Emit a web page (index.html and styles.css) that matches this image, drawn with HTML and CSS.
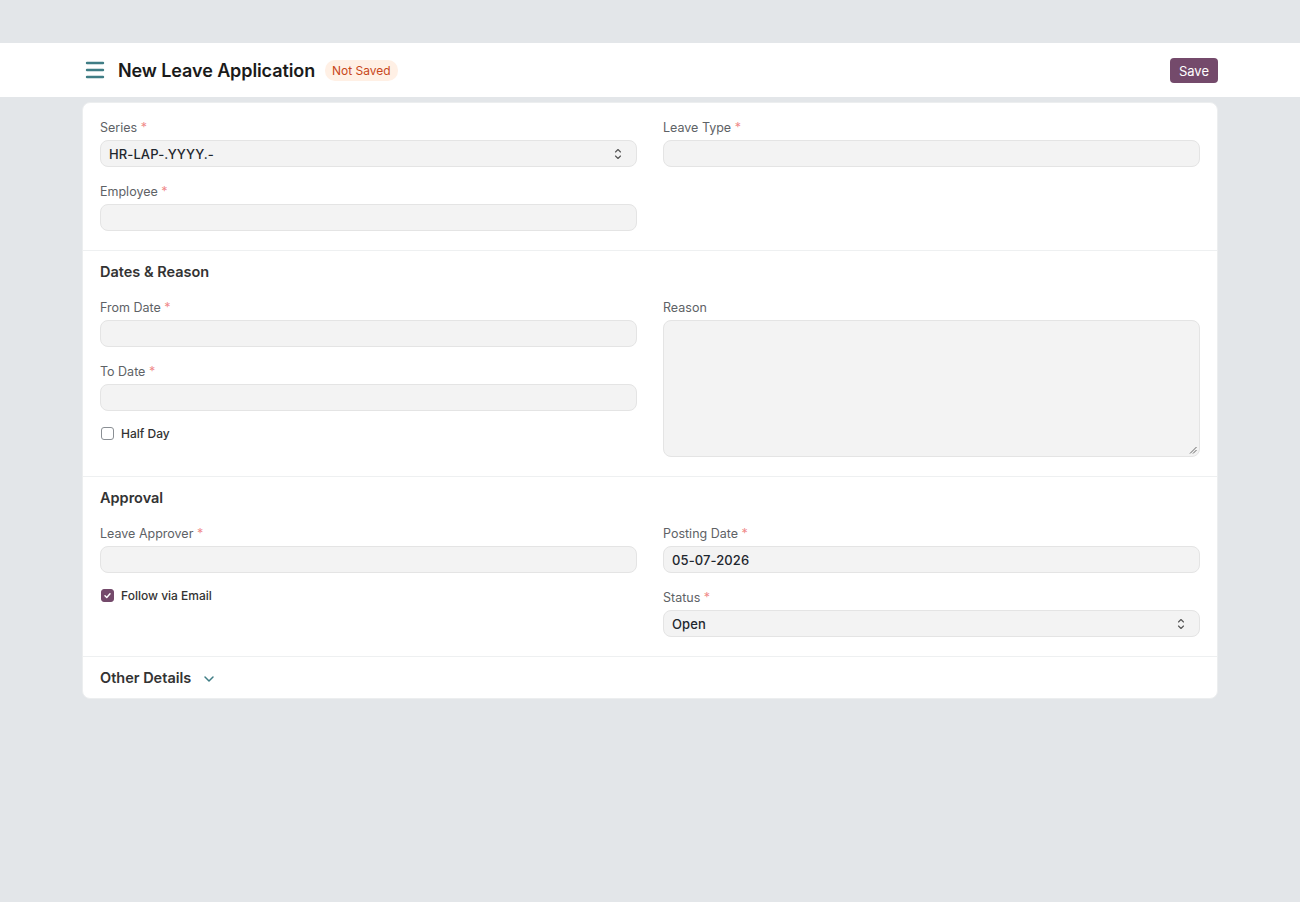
FILE: index.html
```html
<!DOCTYPE html>
<html lang="en">
<head>
    <meta charset="UTF-8">
    <meta name="viewport" content="width=device-width, initial-scale=1.0">
    <title>New Leave Application</title>
    <link rel="stylesheet" href="styles.css">
</head>
<body>
    <header class="page-head">
        <div class="container head-row">
            <div class="head-title">
                <svg class="menu-icon" width="20" height="20" viewBox="0 0 20 20" fill="none" stroke="currentColor" stroke-width="2.4" stroke-linecap="round">
                    <line x1="2" y1="3" x2="18" y2="3"/>
                    <line x1="2" y1="10" x2="18" y2="10"/>
                    <line x1="2" y1="17" x2="18" y2="17"/>
                </svg>
                <h1>New Leave Application</h1>
                <span class="badge">Not Saved</span>
            </div>
            <button class="btn-primary">Save</button>
        </div>
    </header>

    <main class="container">
        <div class="form-card">
            <section class="form-section first">
                <div class="cols">
                    <div class="col">
                        <div class="field">
                            <label>Series <span class="req">*</span></label>
                            <div class="input select">HR-LAP-.YYYY.-
                                <svg class="sel-arrows" width="8" height="12" viewBox="0 0 8 12" fill="none" stroke="currentColor" stroke-width="1.1" stroke-linecap="round" stroke-linejoin="round"><path d="M1.5 4 4 1.5 6.5 4"/><path d="M1.5 8 4 10.5 6.5 8"/></svg>
                            </div>
                        </div>
                        <div class="field">
                            <label>Employee <span class="req">*</span></label>
                            <div class="input"></div>
                        </div>
                    </div>
                    <div class="col">
                        <div class="field">
                            <label>Leave Type <span class="req">*</span></label>
                            <div class="input"></div>
                        </div>
                    </div>
                </div>
            </section>

            <section class="form-section">
                <h2>Dates &amp; Reason</h2>
                <div class="cols">
                    <div class="col">
                        <div class="field">
                            <label>From Date <span class="req">*</span></label>
                            <div class="input"></div>
                        </div>
                        <div class="field">
                            <label>To Date <span class="req">*</span></label>
                            <div class="input"></div>
                        </div>
                        <div class="field check">
                            <span class="box"></span>
                            <span>Half Day</span>
                        </div>
                    </div>
                    <div class="col">
                        <div class="field">
                            <label>Reason</label>
                            <div class="input textarea">
                                <svg class="grip" width="8" height="8" viewBox="0 0 8 8" stroke="#666" stroke-width="1"><line x1="7.5" y1="1" x2="1" y2="7.5"/><line x1="7.5" y1="4" x2="4" y2="7.5"/></svg>
                            </div>
                        </div>
                    </div>
                </div>
            </section>

            <section class="form-section">
                <h2>Approval</h2>
                <div class="cols">
                    <div class="col">
                        <div class="field">
                            <label>Leave Approver <span class="req">*</span></label>
                            <div class="input"></div>
                        </div>
                        <div class="field check">
                            <span class="box checked">
                                <svg width="9" height="9" viewBox="0 0 10 10" fill="none" stroke="#fff" stroke-width="1.6" stroke-linecap="round" stroke-linejoin="round"><path d="M2.2 5.2 4.2 7.2 7.8 3"/></svg>
                            </span>
                            <span>Follow via Email</span>
                        </div>
                    </div>
                    <div class="col">
                        <div class="field">
                            <label>Posting Date <span class="req">*</span></label>
                            <div class="input">05-07-2026</div>
                        </div>
                        <div class="field">
                            <label>Status <span class="req">*</span></label>
                            <div class="input select">Open
                                <svg class="sel-arrows" width="8" height="12" viewBox="0 0 8 12" fill="none" stroke="currentColor" stroke-width="1.1" stroke-linecap="round" stroke-linejoin="round"><path d="M1.5 4 4 1.5 6.5 4"/><path d="M1.5 8 4 10.5 6.5 8"/></svg>
                            </div>
                        </div>
                    </div>
                </div>
            </section>

            <section class="form-section collapsed">
                <h2>Other Details
                    <svg class="chevron" width="12" height="12" viewBox="0 0 12 12" fill="none" stroke="currentColor" stroke-width="1.5" stroke-linecap="round" stroke-linejoin="round"><path d="M2 4 6 8 10 4"/></svg>
                </h2>
            </section>
        </div>
    </main>
</body>
</html>
```

FILE: styles.css
```css
body {
    margin: 0;
    padding-top: 43px;
    background-color: #e3e6e9;
    color: #1f272e;
    font-family: Inter, "Noto Sans", sans-serif;
    min-height: 100vh;
}

.container {
    width: 1136px;
    margin: 0 auto;
}

.page-head {
    background-color: #fff;
    height: 54px;
}

.head-row {
    height: 100%;
    display: flex;
    align-items: center;
    justify-content: space-between;
}

.head-title {
    display: flex;
    align-items: center;
}

.menu-icon {
    color: #3f7d85;
    margin-left: 3px;
    margin-right: 13px;
}

h1 {
    margin: 0;
    font-size: 18px;
    font-weight: 600;
    color: #1a1a1a;
    letter-spacing: -0.1px;
}

.badge {
    margin-left: 10px;
    background-color: #fff0e5;
    color: #c8471a;
    font-size: 12px;
    padding: 3px 7px;
    border-radius: 10px;
}

.btn-primary {
    background-color: #744a6b;
    color: #fff;
    border: none;
    border-radius: 4px;
    font-family: Inter, "Noto Sans", sans-serif;
    font-size: 13px;
    padding: 0 9px;
    height: 25px;
    margin-top: 1px;
}

.form-card {
    margin-top: 5px;
    background-color: #fff;
    border: 1px solid #eceeef;
    border-radius: 8px;
}

.form-section {
    padding: 11px 17px 2px;
    border-top: 1px solid #eef0f1;
}

.form-section.first {
    border-top: none;
    padding-top: 17px;
}

.form-section.collapsed {
    padding-bottom: 10px;
}

h2 {
    margin: 0 0 18px;
    font-size: 14.5px;
    font-weight: 600;
    color: #333;
    line-height: 20px;
    display: flex;
    align-items: center;
}

.collapsed h2 {
    margin-bottom: 0;
}

.chevron {
    color: #3f7d85;
    margin-left: 12px;
    margin-top: 2px;
}

.cols {
    display: grid;
    grid-template-columns: 1fr 1fr;
    column-gap: 26px;
}

.field {
    margin-bottom: 17px;
}

label {
    display: block;
    font-size: 12.5px;
    line-height: 16px;
    color: #5e6266;
    margin-bottom: 4px;
}

.req {
    color: #f08a8a;
}

.input {
    height: 27px;
    box-sizing: border-box;
    background-color: #f3f3f3;
    border: 1px solid #e4e4e4;
    border-radius: 8px;
    padding: 0 8px;
    font-size: 13px;
    font-weight: 500;
    color: #1f272e;
    display: flex;
    align-items: center;
    letter-spacing: 0.1px;
}

.select {
    justify-content: space-between;
}

.sel-arrows {
    color: #555;
    margin-right: 6px;
}

.textarea {
    height: 137px;
    align-items: flex-end;
    justify-content: flex-end;
    padding: 0 2px 2px 0;
}

.check {
    display: flex;
    align-items: center;
    gap: 7px;
    font-size: 12px;
    font-weight: 500;
    color: #333;
    height: 16px;
    margin-top: -3px;
}

.box {
    width: 11px;
    height: 11px;
    border: 1px solid #8a8f94;
    border-radius: 3px;
    display: flex;
    align-items: center;
    justify-content: center;
    margin-left: 1px;
}

.box.checked {
    background-color: #744a6b;
    border-color: #744a6b;
}
```
